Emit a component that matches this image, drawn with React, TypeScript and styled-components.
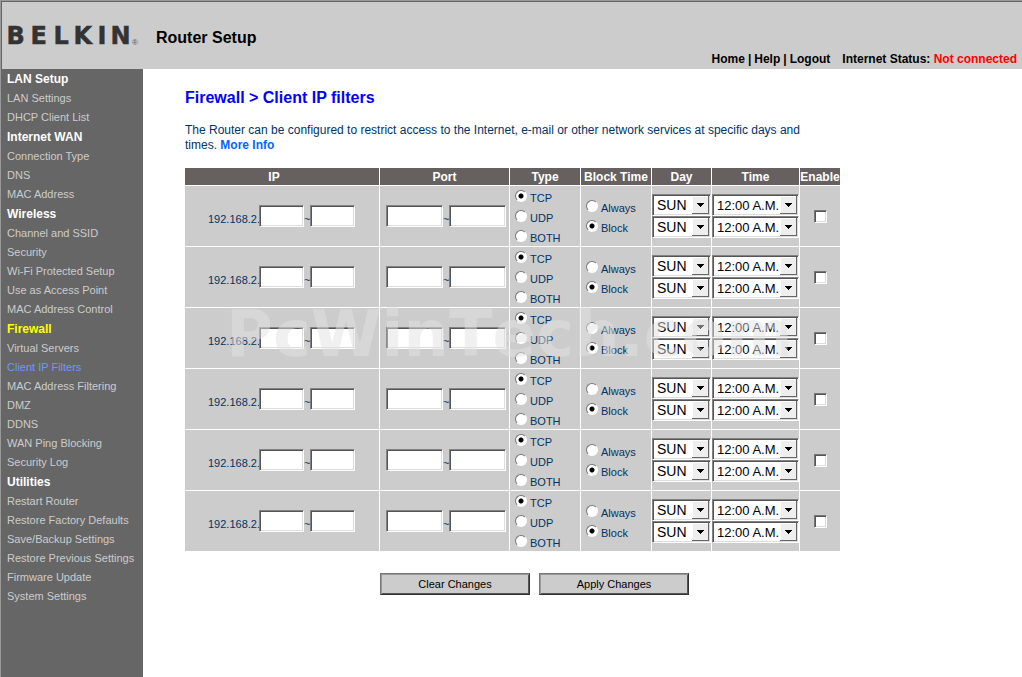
import React from "react";
import styled, { createGlobalStyle } from "styled-components";

const GlobalStyle = createGlobalStyle`
  * { box-sizing: border-box; }
  html, body, #root { height: 100%; }
  body {
    margin: 0;
    background: #fff;
    color: #003366;
    font-family: "Liberation Sans", Arial, sans-serif;
    font-size: 12px;
  }
  a { text-decoration: none; }
`;

const Page = styled.div`
  min-height: 100%;
  display: flex;
  flex-direction: column;
  border-top: 1px solid #999;
  border-left: 1px solid #999;
`;

const Header = styled.header`
  display: flex;
  align-items: flex-end;
  height: 68px;
  padding: 0 5px 3px 4px;
  background: #ccc;
  border-top: 1px solid #666;
  border-left: 1px solid #666;
  color: #000;
  font-weight: bold;
`;

const Logo = styled.svg`
  width: 134px;
  height: 32px;
  margin: 0 16px 14px 0;
`;

const ProductName = styled.h1`
  flex: 1;
  margin: 0 0 18px;
  font-size: 16px;
  line-height: 20px;
`;

const HeaderNav = styled.nav`
  display: flex;
  gap: 3px;
  line-height: 14px;
  margin-right: 12px;
  a { color: #000; }
`;

const Status = styled.div`
  line-height: 14px;
  span { color: #f00; }
`;

const Body = styled.div`
  flex: 1;
  display: flex;
`;

const Sidebar = styled.nav`
  flex: none;
  width: 142px;
  padding-left: 6px;
  background: #666;
`;

const SideHeading = styled.h2<{ $active?: boolean }>`
  margin: 0;
  font-size: 12px;
  line-height: 20px;
  color: ${(p) => (p.$active ? "#ff0" : "#fff")};
`;

const SideLink = styled.a<{ $active?: boolean }>`
  display: block;
  font-size: 11px;
  line-height: 19px;
  white-space: nowrap;
  color: ${(p) => (p.$active ? "#6699ff" : "#ccc")};
`;

const Main = styled.main`
  flex: 1;
  padding: 19px 42px;
`;

const Content = styled.div`
  max-width: 655px;
`;

const Title = styled.h2`
  margin: 0 0 15px;
  font-size: 16px;
  line-height: 20px;
  color: #00f;
`;

const Intro = styled.p`
  margin: 0 0 15px;
  padding-right: 20px;
  font-size: 12px;
  line-height: 15px;
  a { color: #0066ff; font-weight: bold; }
`;

const TableArea = styled.div`
  position: relative;
`;

const Watermark = styled.div`
  position: absolute;
  left: 41px;
  top: 131px;
  font-family: "DejaVu Sans", sans-serif;
  font-size: 64px;
  line-height: 70px;
  font-weight: bold;
  font-kerning: none;
  white-space: nowrap;
  color: rgba(225, 225, 225, 0.5);
  pointer-events: none;
`;

const Table = styled.table`
  width: 100%;
  table-layout: fixed;
  border-collapse: separate;
  border-spacing: 0;
`;

const Head = styled.th`
  height: 17px;
  padding: 2px 0 0;
  background: #666060;
  color: #fff;
  font-size: 12px;
  line-height: 15px;
  white-space: nowrap;
  &:first-child { padding-right: 16px; }
  & + & { border-left: 1px solid #fff; }
`;

const Cell = styled.td`
  height: 61px;
  padding: 0;
  background: #ccc;
  border-top: 1px solid #fff;
  font-size: 11px;
  & + & { border-left: 1px solid #fff; }
`;

const Range = styled.div<{ $indent: number }>`
  display: flex;
  align-items: center;
  padding-left: ${(p) => p.$indent}px;
`;

const RangeText = styled.span<{ $width: number }>`
  flex: none;
  padding-top: 6px;
  width: ${(p) => p.$width}px;
`;

const TextBox = styled.input<{ $width: number }>`
  flex: none;
  width: ${(p) => p.$width}px;
  height: 22px;
  padding: 1px 2px;
  border: 1px solid;
  border-color: #848284 #fff #fff #848284;
  border-radius: 0;
  outline: none;
  background: #fff;
  box-shadow: inset 1px 1px #555, inset -1px -1px #ddd;
  font: inherit;
`;

const Options = styled.div`
  padding-left: 5px;
`;

const Option = styled.label`
  display: flex;
  align-items: center;
  height: 20px;
  line-height: 16px;
  span { padding-top: 4px; }
`;

const Radio = styled.input`
  appearance: none;
  width: 12px;
  height: 12px;
  margin: 0 3px 0 0;
  border: 1px solid;
  border-color: #777 #fff #fff #777;
  border-radius: 50%;
  background: #fff;
  &:checked { background: radial-gradient(circle, #000 0 2px, #fff 3px); }
`;

const SelectBox = styled.div`
  display: flex;
  position: relative;
  height: 22px;
  border: 1px solid;
  border-color: #848284 #fff #fff #848284;
  background: #fff;
  box-shadow: inset 1px 1px #555, inset -1px -1px #ddd;
`;

const Select = styled.select<{ $size: number }>`
  appearance: none;
  width: 100%;
  padding: 0 0 0 4px;
  border: 0;
  outline: none;
  background: transparent;
  color: #000;
  font-family: inherit;
  font-size: ${(p) => p.$size}px;
`;

const Arrow = styled.svg`
  position: absolute;
  right: 1px;
  top: 1px;
  width: 17px;
  height: 18px;
  pointer-events: none;
`;

const Check = styled.input`
  appearance: none;
  display: block;
  width: 13px;
  height: 13px;
  margin: 0 auto;
  border: 1px solid;
  border-color: #777 #fff #fff #777;
  background: #fff;
  box-shadow: inset 1px 1px #555, inset -1px -1px #ddd;
`;

const Actions = styled.div`
  display: flex;
  justify-content: center;
  gap: 9px;
  padding: 22px 0;
  margin-left: 44px;
`;

const Button = styled.button`
  width: 150px;
  height: 22px;
  padding: 0;
  border: 1px solid;
  border-color: #777 #333 #333 #777;
  background: #ccc;
  box-shadow: inset 1px 1px #999, inset -1px -1px #555;
  color: #000;
  font-family: inherit;
  font-size: 11px;
`;

const MENU = [
  { title: "LAN Setup", items: ["LAN Settings", "DHCP Client List"] },
  { title: "Internet WAN", items: ["Connection Type", "DNS", "MAC Address"] },
  { title: "Wireless", items: ["Channel and SSID", "Security", "Wi-Fi Protected Setup", "Use as Access Point", "MAC Address Control"] },
  { title: "Firewall", items: ["Virtual Servers", "Client IP Filters", "MAC Address Filtering", "DMZ", "DDNS", "WAN Ping Blocking", "Security Log"] },
  { title: "Utilities", items: ["Restart Router", "Restore Factory Defaults", "Save/Backup Settings", "Restore Previous Settings", "Firmware Update", "System Settings"] },
];

const COLUMNS: [string, number][] = [
  ["IP", 194], ["Port", 130], ["Type", 71], ["Block Time", 71], ["Day", 60], ["Time", 88], ["Enable", 41],
];

function RadioGroup({ name, options, selected }: { name: string; options: string[]; selected: string }) {
  return (
    <Options>
      {options.map((o) => (
        <Option key={o}>
          <Radio type="radio" name={name} defaultChecked={o === selected} />
          <span>{o}</span>
        </Option>
      ))}
    </Options>
  );
}

function Dropdown({ label, value, size }: { label: string; value: string; size: number }) {
  return (
    <SelectBox>
      <Select aria-label={label} $size={size}><option>{value}</option></Select>
      <Arrow viewBox="0 0 17 18" shapeRendering="crispEdges">
        <rect width="17" height="18" fill="#666" />
        <rect width="16" height="17" fill="#fff" />
        <rect x="1" y="1" width="15" height="16" fill="#eee" />
        <path d="M5 7h7v1h-1v1h-1v1h-1v1h-1v-1h-1v-1h-1v-1h-1z" fill="#000" />
      </Arrow>
    </SelectBox>
  );
}

function FilterRow({ n }: { n: number }) {
  return (
    <tr>
      <Cell>
        <Range $indent={23}>
          <RangeText $width={51}>192.168.2.</RangeText>
          <TextBox $width={45} aria-label={`Rule ${n} first IP`} />
          <RangeText $width={6}>~</RangeText>
          <TextBox $width={45} aria-label={`Rule ${n} last IP`} />
        </Range>
      </Cell>
      <Cell>
        <Range $indent={6}>
          <TextBox $width={57} aria-label={`Rule ${n} first port`} />
          <RangeText $width={6}>~</RangeText>
          <TextBox $width={57} aria-label={`Rule ${n} last port`} />
        </Range>
      </Cell>
      <Cell><RadioGroup name={`type${n}`} options={["TCP", "UDP", "BOTH"]} selected="TCP" /></Cell>
      <Cell><RadioGroup name={`block${n}`} options={["Always", "Block"]} selected="Block" /></Cell>
      <Cell>
        <Dropdown label={`Rule ${n} start day`} value="SUN" size={14} />
        <Dropdown label={`Rule ${n} end day`} value="SUN" size={14} />
      </Cell>
      <Cell>
        <Dropdown label={`Rule ${n} start time`} value="12:00 A.M." size={13} />
        <Dropdown label={`Rule ${n} end time`} value="12:00 A.M." size={13} />
      </Cell>
      <Cell><Check type="checkbox" aria-label={`Enable rule ${n}`} /></Cell>
    </tr>
  );
}

export default function App() {
  return (
    <>
      <GlobalStyle />
      <Page>
        <Header>
          <Logo viewBox="0 0 134 32" role="img" aria-label="Belkin">
            <text y="24" fontFamily="DejaVu Sans, sans-serif" fontWeight="700" fontSize="24" fill="#333" stroke="#333" strokeWidth="0.5">
              <tspan x="0.5">B</tspan><tspan x="24.5">E</tspan><tspan x="47.5">L</tspan><tspan x="67.5">K</tspan><tspan x="91.5">I</tspan><tspan x="104.5">N</tspan>
            </text>
            <text x="126" y="25" fontSize="8" fontWeight="400" fill="#555">®</text>
          </Logo>
          <ProductName>Router Setup</ProductName>
          <HeaderNav>
            <a href="#home">Home</a><span>|</span><a href="#help">Help</a><span>|</span><a href="#logout">Logout</a>
          </HeaderNav>
          <Status>Internet Status: <span>Not connected</span></Status>
        </Header>
        <Body>
          <Sidebar>
            {MENU.map((g) => (
              <React.Fragment key={g.title}>
                <SideHeading $active={g.title === "Firewall"}>{g.title}</SideHeading>
                {g.items.map((i) => (
                  <SideLink key={i} href="#" $active={i === "Client IP Filters"}>{i}</SideLink>
                ))}
              </React.Fragment>
            ))}
          </Sidebar>
          <Main>
            <Content>
              <Title>Firewall &gt; Client IP filters</Title>
              <Intro>
                The Router can be configured to restrict access to the Internet, e-mail or other network services at specific days and times. <a href="#more">More Info</a>
              </Intro>
              <TableArea>
                <Table>
                  <colgroup>
                    {COLUMNS.map(([c, w]) => <col key={c} width={w} />)}
                  </colgroup>
                  <thead>
                    <tr>{COLUMNS.map(([c]) => <Head key={c}>{c}</Head>)}</tr>
                  </thead>
                  <tbody>
                    {[1, 2, 3, 4, 5, 6].map((n) => <FilterRow key={n} n={n} />)}
                  </tbody>
                </Table>
                <Watermark>PcWinTech.com</Watermark>
              </TableArea>
              <Actions>
                <Button type="button">Clear Changes</Button>
                <Button type="button">Apply Changes</Button>
              </Actions>
            </Content>
          </Main>
        </Body>
      </Page>
    </>
  );
}
